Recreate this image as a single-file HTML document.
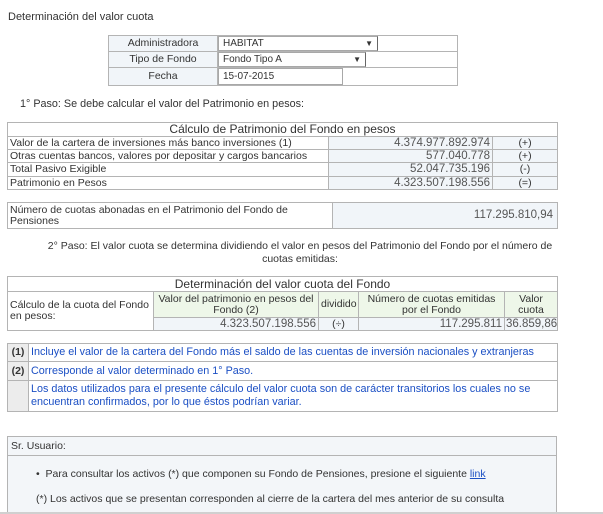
<!DOCTYPE html>
<html><head><meta charset="utf-8"><style>
*{box-sizing:border-box;margin:0;padding:0}
body{width:603px;height:514px;background:#fff;font-family:"Liberation Sans",sans-serif;font-size:10.5px;color:#333;position:relative;overflow:hidden}
.a{position:absolute}
table{border-collapse:collapse;position:absolute;table-layout:fixed}
td{border:1px solid #b4b4b4;padding:0 2px;overflow:hidden;white-space:nowrap;line-height:11px}
.bg{background:#f1f5f9}
.g{background:#eef7e9}
.r{text-align:right}.c{text-align:center}
.num{font-size:11.5px;color:#555}
.sel{position:absolute;border:1px solid #a8a8a8;background:#fff;font-size:10px;padding-left:4px;line-height:14px;height:15px}
.sel b{position:absolute;right:4px;top:0;font-size:8px}
.blue{color:#1b4fc4}
.t{font-size:12px;color:#333}
</style></head><body>
<div class="a" style="left:8px;top:11px;font-size:11px;color:#333">Determinación del valor cuota</div>

<table style="left:108px;top:35px;width:349px">
<col style="width:109px"><col style="width:240px">
<tr style="height:16px"><td class="bg c">Administradora</td><td></td></tr>
<tr style="height:16px"><td class="bg c">Tipo de Fondo</td><td></td></tr>
<tr style="height:18px"><td class="bg c">Fecha</td><td></td></tr>
</table>
<div class="sel" style="left:218px;top:36px;width:160px;border-right-color:#666">HABITAT<b>▼</b></div>
<div class="sel" style="left:218px;top:52px;width:148px;border-right-color:#666">Fondo Tipo A<b>▼</b></div>
<div class="sel" style="left:218px;top:68px;width:125px;height:17px;line-height:16px">15-07-2015</div>

<div class="a" style="left:20px;top:98px;font-size:10.8px">1° Paso: Se debe calcular el valor del Patrimonio en pesos:</div>

<table style="left:7px;top:122px;width:550px">
<col style="width:321px"><col style="width:164px"><col style="width:65px">
<tr style="height:14px"><td colspan="3" class="c t">Cálculo de Patrimonio del Fondo en pesos</td></tr>
<tr style="height:13px"><td>Valor de la cartera de inversiones más banco inversiones (1)</td><td class="bg r num">4.374.977.892.974</td><td class="bg c">(+)</td></tr>
<tr style="height:13px"><td>Otras cuentas bancos, valores por depositar y cargos bancarios</td><td class="bg r num">577.040.778</td><td class="bg c">(+)</td></tr>
<tr style="height:14px"><td>Total Pasivo Exigible</td><td class="bg r num">52.047.735.196</td><td class="bg c">(-)</td></tr>
<tr style="height:13px"><td>Patrimonio en Pesos</td><td class="bg r num">4.323.507.198.556</td><td class="bg c">(=)</td></tr>
</table>

<table style="left:7px;top:202px;width:550px">
<col style="width:325px"><col style="width:225px">
<tr style="height:26px"><td style="white-space:normal">Número de cuotas abonadas en el Patrimonio del Fondo de Pensiones</td><td class="bg r num" style="padding-right:4px">117.295.810,94</td></tr>
</table>

<div class="a c" style="left:20px;top:240px;width:560px;font-size:10.5px;line-height:13px">2° Paso: El valor cuota se determina dividiendo el valor en pesos del Patrimonio del Fondo por el número de<br>cuotas emitidas:</div>

<table style="left:7px;top:276px;width:550px">
<col style="width:146px"><col style="width:165px"><col style="width:40px"><col style="width:146px"><col style="width:53px">
<tr style="height:15px"><td colspan="5" class="c t">Determinación del valor cuota del Fondo</td></tr>
<tr style="height:26px"><td rowspan="2" style="white-space:normal">Cálculo de la cuota del Fondo en pesos:</td><td class="g c" style="white-space:normal">Valor del patrimonio en pesos del Fondo (2)</td><td class="g c">dividido</td><td class="g c" style="white-space:normal">Número de cuotas emitidas por el Fondo</td><td class="g c" style="white-space:normal">Valor cuota</td></tr>
<tr style="height:13px"><td class="bg r num">4.323.507.198.556</td><td class="bg c">(÷)</td><td class="bg r num">117.295.811</td><td class="bg r num" style="padding:0 1px">36.859,86</td></tr>
</table>

<table style="left:7px;top:343px;width:550px">
<col style="width:21px"><col style="width:529px">
<tr style="height:18px"><td class="c" style="background:#ececec;font-weight:bold;color:#333">(1)</td><td class="blue" style="font-size:10.8px">Incluye el valor de la cartera del Fondo más el saldo de las cuentas de inversión nacionales y extranjeras</td></tr>
<tr style="height:19px"><td class="c" style="background:#ececec;font-weight:bold;color:#333">(2)</td><td class="blue" style="font-size:10.8px">Corresponde al valor determinado en 1° Paso.</td></tr>
<tr style="height:31px"><td style="background:#ececec"></td><td class="blue" style="white-space:normal;line-height:13px;font-size:10.8px">Los datos utilizados para el presente cálculo del valor cuota son de carácter transitorios los cuales no se encuentran confirmados, por lo que éstos podrían variar.</td></tr>
</table>

<div class="a" style="left:7px;top:436px;width:550px;height:77px;border:1px solid #b4b4b4;background:#f3f6f9">
<div style="height:19px;border-bottom:1px solid #b4b4b4;padding-left:3px;line-height:18px">Sr. Usuario:</div>
<div class="a" style="left:28px;top:31px">•&nbsp;&nbsp;Para consultar los activos (*) que componen su Fondo de Pensiones, presione el siguiente <span style="color:#1b4fc4;text-decoration:underline">link</span></div>
<div class="a" style="left:28px;top:56px">(*) Los activos que se presentan corresponden al cierre de la cartera del mes anterior de su consulta</div>
</div>
<div class="a" style="left:0;top:512px;width:603px;height:2px;background:#d0d0d0"></div>
</body></html>
